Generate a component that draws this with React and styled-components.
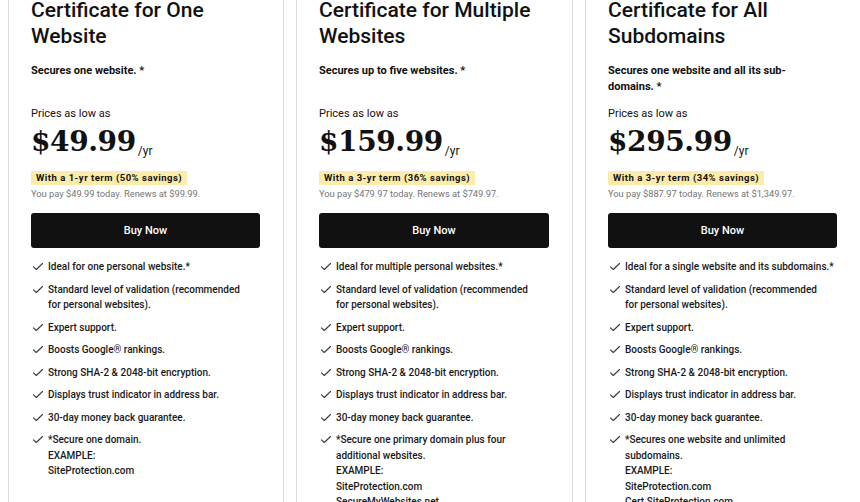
import React from "react";
import styled, { createGlobalStyle } from "styled-components";

const GlobalStyle = createGlobalStyle`
  html, body {
    margin: 0;
    padding: 0;
    background: #ffffff;
    overflow: hidden;
  }
  body {
    font-family: Roboto, "Liberation Sans", Arial, sans-serif;
    color: #111111;
  }
`;

const Page = styled.div`
  width: 860px;
  height: 502px;
  overflow: hidden;
  padding-left: 8px;
  box-sizing: border-box;
`;

const Row = styled.div`
  display: grid;
  grid-template-columns: 276px 277px 276px;
  gap: 12px;
  margin-top: -30px;
`;

const Card = styled.div`
  border: 1px solid #dcdcdc;
  border-radius: 3px;
  padding: 26px 23px 40px 22px;
  height: 600px;
  box-sizing: border-box;
`;

const Title = styled.h2`
  margin: 0;
  font-size: 21px;
  line-height: 26px;
  font-weight: 500;
`;

const Subtitle = styled.p`
  margin: 14px 0 0;
  max-width: 195px;
  height: 32px;
  font-size: 11px;
  line-height: 16px;
  font-weight: 700;
`;

const Lead = styled.div`
  margin-top: 11px;
  font-size: 11px;
  line-height: 16px;
`;

const PriceLine = styled.div`
  margin-top: 3px;
  height: 34px;
  line-height: 34px;
  white-space: nowrap;
`;

const Price = styled.span`
  font-family: "DejaVu Serif", "Liberation Serif", serif;
  font-weight: 700;
  font-size: 28px;
  letter-spacing: -0.4px;
`;

const Per = styled.span`
  font-size: 12px;
  margin-left: 2px;
  vertical-align: -4px;
`;

const Savings = styled.div`
  display: inline-block;
  margin-top: 12px;
  padding: 0 5px;
  height: 14px;
  line-height: 14px;
  background: #fcebab;
  font-size: 9.5px;
  font-weight: 700;
  letter-spacing: 0.5px;
  border-radius: 1px;
`;

const Terms = styled.div`
  margin-top: 2px;
  font-size: 9.3px;
  line-height: 14px;
  color: #767676;
`;

const BuyButton = styled.button`
  display: block;
  width: 100%;
  height: 35px;
  margin-top: 12px;
  border: none;
  border-radius: 3px;
  background: #111111;
  color: #ffffff;
  font-family: inherit;
  font-size: 11px;
  font-weight: 500;
  cursor: pointer;
`;

const Features = styled.ul`
  list-style: none;
  margin: 11px 0 0;
  padding: 0;
  display: flex;
  flex-direction: column;
  gap: 7px;
`;

const Feature = styled.li`
  display: flex;
  align-items: flex-start;
  gap: 4px;
  font-size: 10px;
  line-height: 15.5px;
  font-weight: 500;
  color: #1a1a1a;
`;

const Check = styled.svg`
  flex: none;
  width: 12px;
  height: 15px;
  margin-left: 1px;
`;

const FeatureText = styled.span`
  white-space: pre-line;
`;

const CheckIcon = () => (
  <Check viewBox="0 0 12 15">
    <polyline
      points="1.5,7.8 4.3,10.5 10.5,4.5"
      fill="none"
      stroke="#3a3a3a"
      strokeWidth="1.1"
      strokeLinecap="round"
      strokeLinejoin="round"
    />
  </Check>
);

const common = [
  "Standard level of validation (recommended\nfor personal websites).",
  "Expert support.",
  "Boosts Google® rankings.",
  "Strong SHA-2 & 2048-bit encryption.",
  "Displays trust indicator in address bar.",
  "30-day money back guarantee.",
];

const plans = [
  {
    title: "Certificate for One Website",
    subtitle: "Secures one website. *",
    price: "$49.99",
    savings: "With a 1-yr term (50% savings)",
    terms: "You pay $49.99 today. Renews at $99.99.",
    first: "Ideal for one personal website.*",
    note: "*Secure one domain.\nEXAMPLE:\nSiteProtection.com",
  },
  {
    title: "Certificate for Multiple Websites",
    subtitle: "Secures up to five websites. *",
    price: "$159.99",
    savings: "With a 3-yr term (36% savings)",
    terms: "You pay $479.97 today. Renews at $749.97.",
    first: "Ideal for multiple personal websites.*",
    note: "*Secure one primary domain plus four\nadditional websites.\nEXAMPLE:\nSiteProtection.com\nSecureMyWebsites.net",
  },
  {
    title: "Certificate for All Subdomains",
    subtitle: "Secures one website and all its sub-domains. *",
    price: "$295.99",
    savings: "With a 3-yr term (34% savings)",
    terms: "You pay $887.97 today. Renews at $1,349.97.",
    first: "Ideal for a single website and its subdomains.*",
    note: "*Secures one website and unlimited\nsubdomains.\nEXAMPLE:\nSiteProtection.com\nCert.SiteProtection.com",
  },
];

const PlanCard = ({ plan }) => (
  <Card>
    <Title>{plan.title}</Title>
    <Subtitle>{plan.subtitle}</Subtitle>
    <Lead>Prices as low as</Lead>
    <PriceLine>
      <Price>{plan.price}</Price>
      <Per>/yr</Per>
    </PriceLine>
    <Savings>{plan.savings}</Savings>
    <Terms>{plan.terms}</Terms>
    <BuyButton>Buy Now</BuyButton>
    <Features>
      {[plan.first, ...common, plan.note].map((item, index) => (
        <Feature key={index}>
          <CheckIcon />
          <FeatureText>{item}</FeatureText>
        </Feature>
      ))}
    </Features>
  </Card>
);

export default function App() {
  return (
    <Page>
      <GlobalStyle />
      <Row>
        {plans.map((plan) => (
          <PlanCard key={plan.title} plan={plan} />
        ))}
      </Row>
    </Page>
  );
}
